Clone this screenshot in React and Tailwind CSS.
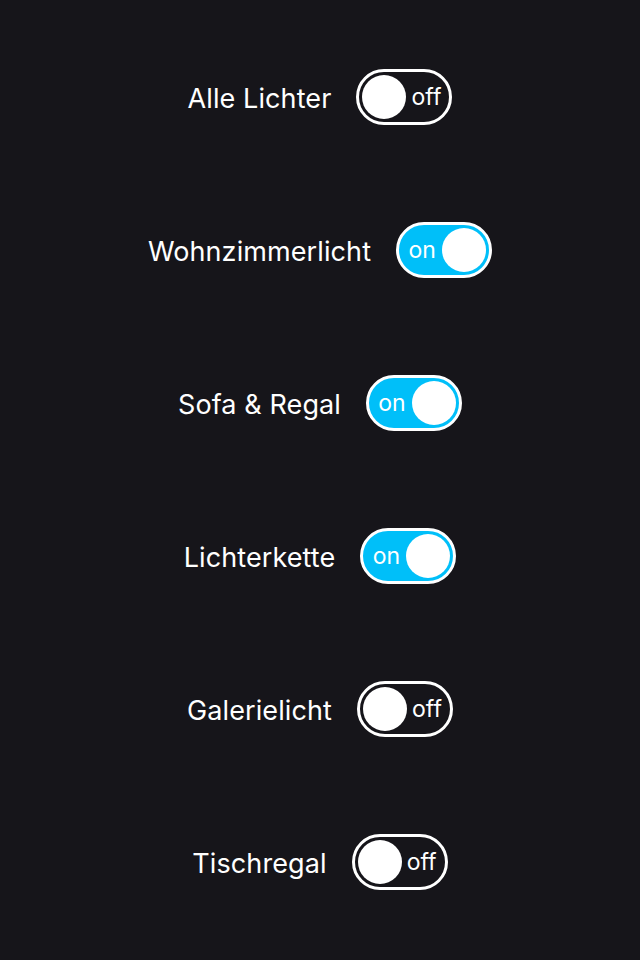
import React, { useState } from "react";

const initial = [
  { label: "Alle Lichter", on: false },
  { label: "Wohnzimmerlicht", on: true },
  { label: "Sofa & Regal", on: true },
  { label: "Lichterkette", on: true },
  { label: "Galerielicht", on: false },
  { label: "Tischregal", on: false },
];

function Toggle({ on, onClick }) {
  return (
    <button
      onClick={onClick}
      className={
        "flex items-center w-[96px] h-[56px] rounded-full border-[3px] border-white p-[3px] " +
        (on ? "bg-[#00bff9]" : "bg-transparent")
      }
    >
      {on ? (
        <>
          <span className="flex-1 text-center text-white text-[23px] leading-none pt-[2px]">on</span>
          <span className="w-[44px] h-[44px] rounded-full bg-white shrink-0" />
        </>
      ) : (
        <>
          <span className="w-[44px] h-[44px] rounded-full bg-white shrink-0" />
          <span className="flex-1 text-center text-white text-[23px] leading-none pt-[2px]">off</span>
        </>
      )}
    </button>
  );
}

export default function App() {
  const [items, setItems] = useState(initial);
  return (
    <div
      className="w-[640px] h-[960px] bg-[#16151a] pt-[20px] flex flex-col"
      style={{ fontFamily: "Inter, 'Noto Sans', sans-serif" }}
    >
      {items.map((it, i) => (
        <div key={i} className="h-[153px] flex items-center justify-center gap-[25px]">
          <span className="text-white text-[27px] tracking-[0.1px] pt-[5px]">{it.label}</span>
          <Toggle
            on={it.on}
            onClick={() =>
              setItems(items.map((x, j) => (j === i ? { ...x, on: !x.on } : x)))
            }
          />
        </div>
      ))}
    </div>
  );
}
